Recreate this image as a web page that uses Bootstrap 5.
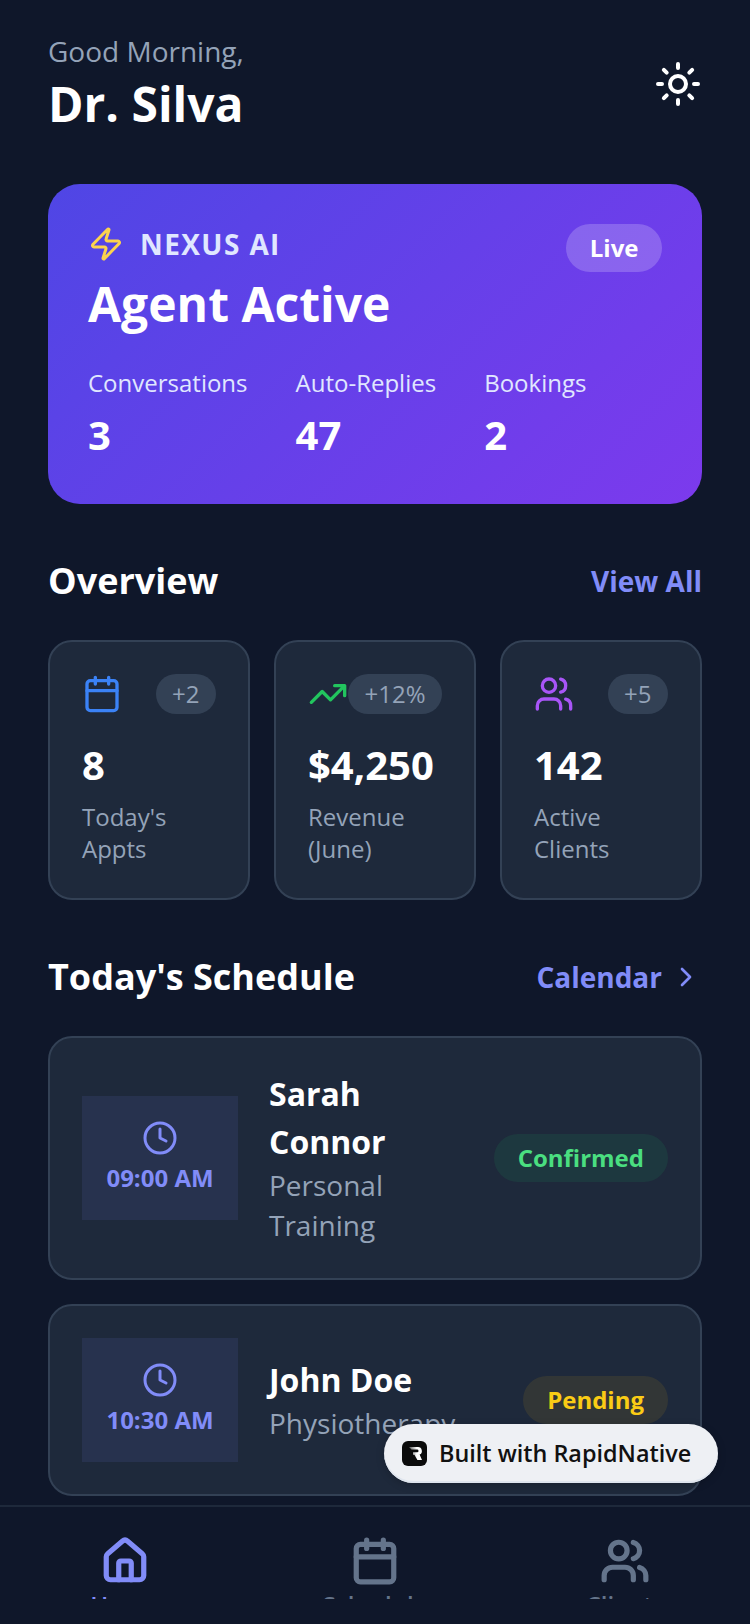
<!DOCTYPE html>
<html lang="en">

<head>
    <meta charset="UTF-8">
    <meta name="viewport" content="width=device-width, initial-scale=1.0">
    <title>Dr. Silva</title>

    <link href="https://cdn.jsdelivr.net/npm/bootstrap@5.3.0/dist/css/bootstrap.min.css" rel="stylesheet">

    <style>
        html, body {
            height: 1624px;
            overflow: hidden;
        }

        body {
            background-color: #0f172a;
            color: #fff;
            font-family: "Open Sans", sans-serif;
        }

        svg.ico {
            fill: none;
            stroke: currentColor;
            stroke-width: 2;
            stroke-linecap: round;
            stroke-linejoin: round;
            flex-shrink: 0;
        }

        .app-main {
            height: 1505px;
            overflow: hidden;
            padding: 32px 48px 0;
        }

        .hello {
            font-size: 28px;
            line-height: 38px;
            color: #94a3b8;
            margin-bottom: 2px;
        }

        .doc-name {
            font-size: 48px;
            line-height: 64px;
            font-weight: 700;
        }

        .hero {
            height: 320px;
            margin-top: 48px;
            padding: 40px;
            border-radius: 32px;
            background: linear-gradient(135deg, #4f46e5, #7c3aed);
        }

        .hero-tag {
            font-size: 28px;
            line-height: 40px;
            font-weight: 700;
            letter-spacing: 1.4px;
            color: #e0e7ff;
        }

        .live-pill {
            background: rgba(255, 255, 255, .2);
            border-radius: 24px;
            padding: 8px 23.5px;
            font-size: 24px;
            line-height: 32px;
            font-weight: 700;
        }

        .hero-title {
            font-size: 48px;
            line-height: 64px;
            font-weight: 700;
        }

        .hero-stats {
            gap: 48px;
            margin-top: 31px;
        }

        .hero-lbl {
            font-size: 24px;
            line-height: 32px;
            color: #e0e7ff;
        }

        .hero-num {
            font-size: 40px;
            line-height: 54px;
            font-weight: 700;
            margin-top: 9px;
        }

        .sec-title {
            font-size: 36px;
            line-height: 54px;
            font-weight: 700;
        }

        .sec-link {
            font-size: 28px;
            line-height: 38px;
            font-weight: 700;
            color: #818cf8;
        }

        .stat-box {
            flex: 1 1 0;
            min-width: 0;
            height: 260px;
            padding: 32px;
            background: #1e293b;
            border: 2px solid #334155;
            border-radius: 24px;
        }

        .stat-chip {
            background: #334155;
            color: #94a3b8;
            border-radius: 24px;
            padding: 4px 16.5px;
            font-size: 24px;
            line-height: 32px;
        }

        .stat-num {
            font-size: 40px;
            line-height: 54px;
            font-weight: 700;
            margin-top: 24px;
        }

        .stat-lbl {
            font-size: 24px;
            line-height: 32px;
            color: #94a3b8;
            margin-top: 9px;
        }

        .appt {
            background: #1e293b;
            border: 2px solid #334155;
            border-radius: 24px;
            padding: 32px;
        }

        .time-box {
            width: 156px;
            height: 124px;
            padding-bottom: 2px;
            gap: 6px;
            background: rgba(129, 140, 248, .1);
            color: #818cf8;
            font-size: 24px;
            line-height: 32px;
            font-weight: 700;
            flex-shrink: 0;
        }

        .appt-text {
            min-width: 0;
            margin: 0 32px 0 31px;
        }

        .appt-name {
            font-size: 32px;
            line-height: 48px;
            font-weight: 700;
        }

        .appt-kind {
            font-size: 28px;
            line-height: 40px;
            color: #94a3b8;
            margin-top: -1px;
            margin-bottom: 1px;
        }

        .state-pill {
            border-radius: 24px;
            padding: 8px 24px;
            font-size: 24px;
            line-height: 32px;
            font-weight: 700;
            flex-shrink: 0;
        }

        .state-ok {
            background: rgba(34, 197, 94, .1);
            color: #4ade80;
        }

        .state-wait {
            background: rgba(234, 179, 8, .1);
            color: #facc15;
        }

        .made-with {
            position: absolute;
            left: 384px;
            top: 1424px;
            width: 334px;
            height: 59px;
            padding-left: 18px;
            gap: 12px;
            background: #eef0f4;
            border-radius: 30px;
            color: #111;
            font-size: 23.4px;
            font-weight: 600;
            z-index: 5;
            box-shadow: inset 0 -2px 0 #dfe5ee, 0 2px 8px rgba(0, 0, 0, .2);
        }

        .made-logo {
            width: 25px;
            height: 25px;
            border-radius: 6px;
            background: #0b0b0b;
            flex-shrink: 0;
        }

        .tabbar {
            height: 119px;
            border-top: 2px solid #1e293b;
            background: #0f172a;
        }

        .tab-item {
            flex: 1 1 0;
            height: 92px;
            padding-top: 29px;
            gap: 3px;
            overflow: hidden;
            color: #64748b;
            font-size: 24px;
            line-height: 32px;
            font-weight: 600;
        }

        .tab-item svg.ico {
            stroke-width: 2.5;
        }

        .tab-on {
            color: #818cf8;
        }
    </style>
</head>

<body class="position-relative">
    <main class="app-main">
        <!-- Cabecera -->
        <header class="d-flex justify-content-between align-items-center">
            <div>
                <div class="hello">Good Morning,</div>
                <div class="doc-name">Dr. Silva</div>
            </div>
            <svg class="ico text-white" width="48" height="48" viewBox="0 0 24 24">
                <circle cx="12" cy="12" r="4" />
                <path d="M12 2v2M12 20v2M4.93 4.93l1.41 1.41M17.66 17.66l1.41 1.41M2 12h2M20 12h2M6.34 17.66l-1.41 1.41M19.07 4.93l-1.41 1.41" />
            </svg>
        </header>

        <!-- Tarjeta del agente -->
        <section class="hero">
            <div class="d-flex justify-content-between align-items-start">
                <div class="d-flex align-items-center gap-3">
                    <svg class="ico" width="36" height="36" viewBox="0 0 24 24" style="color:#fcd34d">
                        <path d="M4 14a1 1 0 0 1-.78-1.63l9.9-10.2a.5.5 0 0 1 .86.46l-1.92 6.02A1 1 0 0 0 13 10h7a1 1 0 0 1 .78 1.63l-9.9 10.2a.5.5 0 0 1-.86-.46l1.92-6.02A1 1 0 0 0 11 14z" />
                    </svg>
                    <span class="hero-tag">NEXUS AI</span>
                </div>
                <span class="live-pill">Live</span>
            </div>
            <div class="hero-title">Agent Active</div>
            <div class="hero-stats d-flex">
                <div>
                    <div class="hero-lbl">Conversations</div>
                    <div class="hero-num">3</div>
                </div>
                <div>
                    <div class="hero-lbl">Auto-Replies</div>
                    <div class="hero-num">47</div>
                </div>
                <div>
                    <div class="hero-lbl">Bookings</div>
                    <div class="hero-num">2</div>
                </div>
            </div>
        </section>

        <!-- Overview -->
        <div class="d-flex justify-content-between align-items-center" style="margin-top:50px">
            <div class="sec-title">Overview</div>
            <div class="sec-link">View All</div>
        </div>
        <div class="d-flex" style="gap:24px;margin-top:32px">
            <div class="stat-box">
                <div class="d-flex justify-content-between align-items-center">
                    <svg class="ico" width="40" height="40" viewBox="0 0 24 24" style="color:#3b82f6">
                        <path d="M8 2v4M16 2v4M3 10h18" />
                        <rect x="3" y="4" width="18" height="18" rx="2" />
                    </svg>
                    <span class="stat-chip">+2</span>
                </div>
                <div class="stat-num">8</div>
                <div class="stat-lbl">Today's Appts</div>
            </div>
            <div class="stat-box">
                <div class="d-flex justify-content-between align-items-center">
                    <svg class="ico" width="40" height="40" viewBox="0 0 24 24" style="color:#22c55e">
                        <path d="M22 7l-8.5 8.5-5-5L2 17M16 7h6v6" />
                    </svg>
                    <span class="stat-chip">+12%</span>
                </div>
                <div class="stat-num">$4,250</div>
                <div class="stat-lbl">Revenue (June)</div>
            </div>
            <div class="stat-box">
                <div class="d-flex justify-content-between align-items-center">
                    <svg class="ico" width="40" height="40" viewBox="0 0 24 24" style="color:#a855f7">
                        <path d="M16 21v-2a4 4 0 0 0-4-4H6a4 4 0 0 0-4 4v2M22 21v-2a4 4 0 0 0-3-3.87M16 3.13a4 4 0 0 1 0 7.75" />
                        <circle cx="9" cy="7" r="4" />
                    </svg>
                    <span class="stat-chip">+5</span>
                </div>
                <div class="stat-num">142</div>
                <div class="stat-lbl">Active Clients</div>
            </div>
        </div>

        <!-- Agenda de hoy -->
        <div class="d-flex justify-content-between align-items-center" style="margin-top:50px">
            <div class="sec-title">Today's Schedule</div>
            <div class="sec-link d-flex align-items-center gap-2">Calendar
                <svg class="ico" width="32" height="32" viewBox="0 0 24 24">
                    <path d="M9 18l6-6-6-6" />
                </svg>
            </div>
        </div>
        <div class="d-flex flex-column" style="gap:24px;margin-top:32px">
            <div class="appt d-flex align-items-center">
                <div class="time-box d-flex flex-column align-items-center justify-content-center">
                    <svg class="ico" width="36" height="36" viewBox="0 0 24 24">
                        <circle cx="12" cy="12" r="10" />
                        <path d="M12 6v6l4 2" />
                    </svg>
                    <span>09:00 AM</span>
                </div>
                <div class="appt-text flex-grow-1">
                    <div class="appt-name">Sarah Connor</div>
                    <div class="appt-kind">Personal Training</div>
                </div>
                <span class="state-pill state-ok">Confirmed</span>
            </div>
            <div class="appt d-flex align-items-center">
                <div class="time-box d-flex flex-column align-items-center justify-content-center">
                    <svg class="ico" width="36" height="36" viewBox="0 0 24 24">
                        <circle cx="12" cy="12" r="10" />
                        <path d="M12 6v6l4 2" />
                    </svg>
                    <span>10:30 AM</span>
                </div>
                <div class="appt-text flex-grow-1">
                    <div class="appt-name">John Doe</div>
                    <div class="appt-kind">Physiotherapy</div>
                </div>
                <span class="state-pill state-wait">Pending</span>
            </div>
        </div>
    </main>

    <!-- Sello flotante -->
    <div class="made-with d-flex align-items-center">
        <svg class="made-logo" viewBox="0 0 25 25">
            <defs>
                <linearGradient id="logoFade" x1="0" y1="0" x2="1" y2="0">
                    <stop offset="0" stop-color="#555" />
                    <stop offset=".6" stop-color="#fff" />
                </linearGradient>
            </defs>
            <path d="M7 6h9a4 4 0 0 1 1.6 7.6L20 19h-4.6l-3-5.2H11v-2.6h4.2a1.3 1.3 0 0 0 0-2.6H9.5z" fill="url(#logoFade)" />
        </svg>
        <span>Built with RapidNative</span>
    </div>

    <!-- Navegación inferior -->
    <nav class="tabbar d-flex">
        <div class="tab-item tab-on d-flex flex-column align-items-center">
            <svg class="ico" width="50" height="50" viewBox="0 0 24 24">
                <path d="M15 21v-8a1 1 0 0 0-1-1h-4a1 1 0 0 0-1 1v8" />
                <path d="M3 10a2 2 0 0 1 .709-1.528l7-5.999a2 2 0 0 1 2.582 0l7 5.999A2 2 0 0 1 21 10v9a2 2 0 0 1-2 2H5a2 2 0 0 1-2-2z" />
            </svg>
            <span>Home</span>
        </div>
        <div class="tab-item d-flex flex-column align-items-center">
            <svg class="ico" width="50" height="50" viewBox="0 0 24 24">
                <path d="M8 2v4M16 2v4M3 10h18" />
                <rect x="3" y="4" width="18" height="18" rx="2" />
            </svg>
            <span>Schedule</span>
        </div>
        <div class="tab-item d-flex flex-column align-items-center">
            <svg class="ico" width="50" height="50" viewBox="0 0 24 24">
                <path d="M16 21v-2a4 4 0 0 0-4-4H6a4 4 0 0 0-4 4v2M22 21v-2a4 4 0 0 0-3-3.87M16 3.13a4 4 0 0 1 0 7.75" />
                <circle cx="9" cy="7" r="4" />
            </svg>
            <span>Clients</span>
        </div>
    </nav>

    <script src="https://cdn.jsdelivr.net/npm/bootstrap@5.3.0/dist/js/bootstrap.bundle.min.js"></script>
</body>

</html>
